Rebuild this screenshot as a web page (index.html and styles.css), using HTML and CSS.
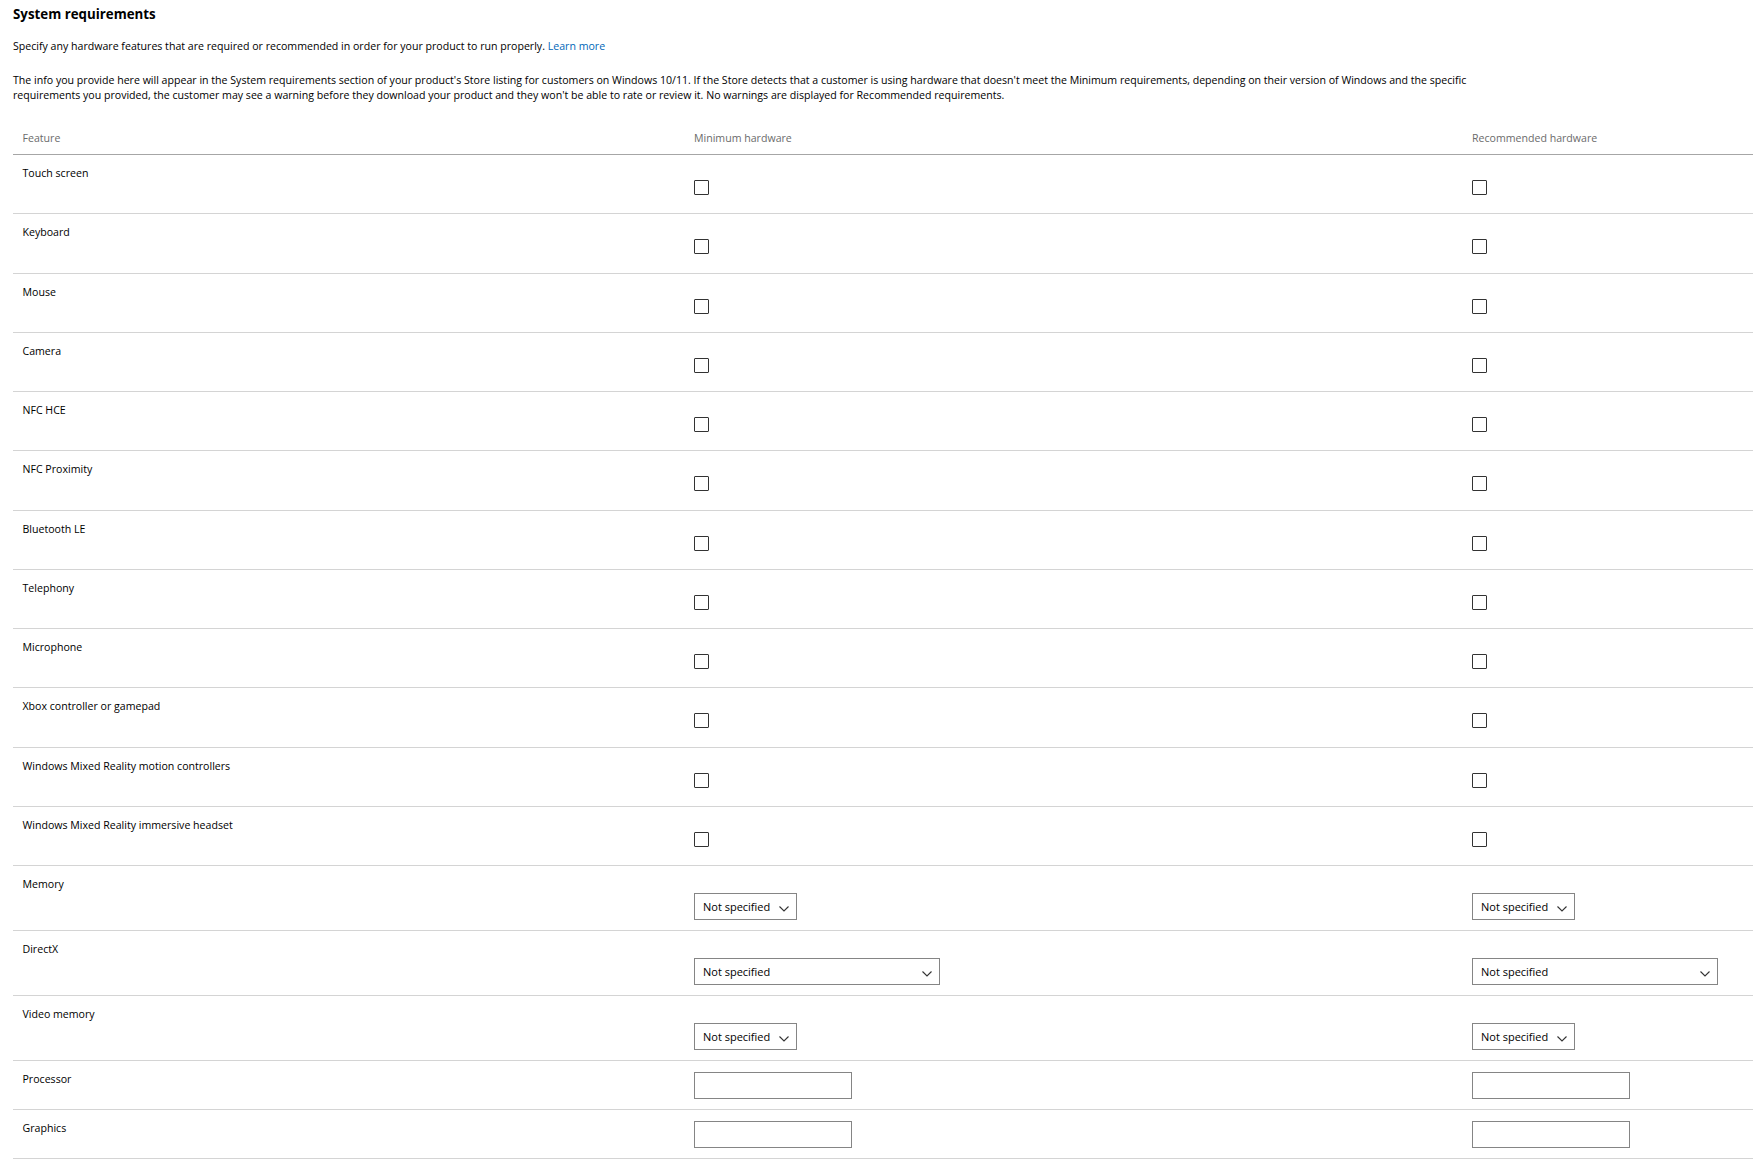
FILE: index.html
```html
<!DOCTYPE html>
<html lang="en">
<head>
<meta charset="utf-8">
<title>System requirements</title>
<link rel="stylesheet" href="styles.css">
</head>
<body>
<div class="page">
  <h1 class="title">System requirements</h1>
  <p class="intro">Specify any hardware features that are required or recommended in order for your product to run properly. <a class="link" href="#">Learn more</a></p>
  <p class="info">The info you provide here will appear in the System requirements section of your product's Store listing for customers on Windows 10/11. If the Store detects that a customer is using hardware that doesn't meet the Minimum requirements, depending on their version of Windows and the specific<br>requirements you provided, the customer may see a warning before they download your product and they won't be able to rate or review it. No warnings are displayed for Recommended requirements.</p>

  <div class="table">
    <div class="row head">
      <div class="hcell first">Feature</div>
      <div class="hcell">Minimum hardware</div>
      <div class="hcell">Recommended hardware</div>
    </div>

    <div class="row check"><div class="label">Touch screen</div><div class="ccell"><span class="box"></span></div><div class="ccell"><span class="box"></span></div></div>
    <div class="row check"><div class="label">Keyboard</div><div class="ccell"><span class="box"></span></div><div class="ccell"><span class="box"></span></div></div>
    <div class="row check"><div class="label">Mouse</div><div class="ccell"><span class="box"></span></div><div class="ccell"><span class="box"></span></div></div>
    <div class="row check"><div class="label">Camera</div><div class="ccell"><span class="box"></span></div><div class="ccell"><span class="box"></span></div></div>
    <div class="row check"><div class="label">NFC HCE</div><div class="ccell"><span class="box"></span></div><div class="ccell"><span class="box"></span></div></div>
    <div class="row check"><div class="label">NFC Proximity</div><div class="ccell"><span class="box"></span></div><div class="ccell"><span class="box"></span></div></div>
    <div class="row check"><div class="label">Bluetooth LE</div><div class="ccell"><span class="box"></span></div><div class="ccell"><span class="box"></span></div></div>
    <div class="row check"><div class="label">Telephony</div><div class="ccell"><span class="box"></span></div><div class="ccell"><span class="box"></span></div></div>
    <div class="row check"><div class="label">Microphone</div><div class="ccell"><span class="box"></span></div><div class="ccell"><span class="box"></span></div></div>
    <div class="row check"><div class="label">Xbox controller or gamepad</div><div class="ccell"><span class="box"></span></div><div class="ccell"><span class="box"></span></div></div>
    <div class="row check"><div class="label">Windows Mixed Reality motion controllers</div><div class="ccell"><span class="box"></span></div><div class="ccell"><span class="box"></span></div></div>
    <div class="row check"><div class="label">Windows Mixed Reality immersive headset</div><div class="ccell"><span class="box"></span></div><div class="ccell"><span class="box"></span></div></div>

    <div class="row sel">
      <div class="label">Memory</div>
      <div class="scell"><div class="select small"><span>Not specified</span><svg class="chev" width="10" height="6" viewBox="0 0 10 6"><path d="M0.5 0.5 L5 5 L9.5 0.5" fill="none" stroke="#333" stroke-width="1.1"/></svg></div></div>
      <div class="scell"><div class="select small"><span>Not specified</span><svg class="chev" width="10" height="6" viewBox="0 0 10 6"><path d="M0.5 0.5 L5 5 L9.5 0.5" fill="none" stroke="#333" stroke-width="1.1"/></svg></div></div>
    </div>
    <div class="row sel">
      <div class="label">DirectX</div>
      <div class="scell"><div class="select wide"><span>Not specified</span><svg class="chev" width="10" height="6" viewBox="0 0 10 6"><path d="M0.5 0.5 L5 5 L9.5 0.5" fill="none" stroke="#333" stroke-width="1.1"/></svg></div></div>
      <div class="scell"><div class="select wide"><span>Not specified</span><svg class="chev" width="10" height="6" viewBox="0 0 10 6"><path d="M0.5 0.5 L5 5 L9.5 0.5" fill="none" stroke="#333" stroke-width="1.1"/></svg></div></div>
    </div>
    <div class="row sel">
      <div class="label">Video memory</div>
      <div class="scell"><div class="select small"><span>Not specified</span><svg class="chev" width="10" height="6" viewBox="0 0 10 6"><path d="M0.5 0.5 L5 5 L9.5 0.5" fill="none" stroke="#333" stroke-width="1.1"/></svg></div></div>
      <div class="scell"><div class="select small"><span>Not specified</span><svg class="chev" width="10" height="6" viewBox="0 0 10 6"><path d="M0.5 0.5 L5 5 L9.5 0.5" fill="none" stroke="#333" stroke-width="1.1"/></svg></div></div>
    </div>

    <div class="row inp">
      <div class="label">Processor</div>
      <div class="icell"><div class="input"></div></div>
      <div class="icell"><div class="input"></div></div>
    </div>
    <div class="row inp">
      <div class="label">Graphics</div>
      <div class="icell"><div class="input"></div></div>
      <div class="icell"><div class="input"></div></div>
    </div>
  </div>
</div>
</body>
</html>
```

FILE: styles.css
```css
html, body {
  margin: 0;
  padding: 0;
  background: #ffffff;
}
body {
  font-family: "Open Sans", "Noto Sans", sans-serif;
  font-size: 10.6px;
  color: #000000;
}
.page {
  padding: 4px 0 0 13px;
}
.title {
  margin: 0;
  font-size: 13.3px;
  line-height: 20px;
  font-weight: 700;
}
.intro {
  margin: 14px 0 0;
  line-height: 16px;
}
.link {
  color: #0067b8;
  text-decoration: none;
}
.info {
  margin: 19px 0 0;
  line-height: 15px;
  white-space: nowrap;
}
.table {
  margin-top: 0;
}
.row {
  display: grid;
  grid-template-columns: 681px 778px 1fr;
  box-sizing: border-box;
  border-bottom: 1px solid #d4d4d4;
}
.row.head {
  border-bottom: 1px solid #a6a6a6;
  padding: 27px 0 8px;
}
.hcell {
  line-height: 16px;
  color: #6b6b6b;
}
.hcell.first {
  padding-left: 9.5px;
}
.label {
  padding: 10px 0 0 9.5px;
  line-height: 16px;
}
.row.check {
  height: 59.25px;
}
.ccell {
  padding-top: 25px;
}
.box {
  display: block;
  width: 15px;
  height: 15px;
  box-sizing: border-box;
  border: 1px solid #333333;
  border-radius: 1px;
}
.scell {
  padding: 27px 0 10px;
}
.select {
  box-sizing: border-box;
  height: 27px;
  border: 1px solid #858585;
  display: flex;
  align-items: center;
  justify-content: space-between;
  padding: 0 7px 0 8px;
  font-size: 11px;
}
.select.small {
  width: 103px;
}
.select.wide {
  width: 246px;
}
.chev {
  display: block;
  margin-top: 4px;
}
.icell {
  padding: 11px 0 10px;
}
.input {
  box-sizing: border-box;
  width: 158px;
  height: 27px;
  border: 1px solid #858585;
}
```
